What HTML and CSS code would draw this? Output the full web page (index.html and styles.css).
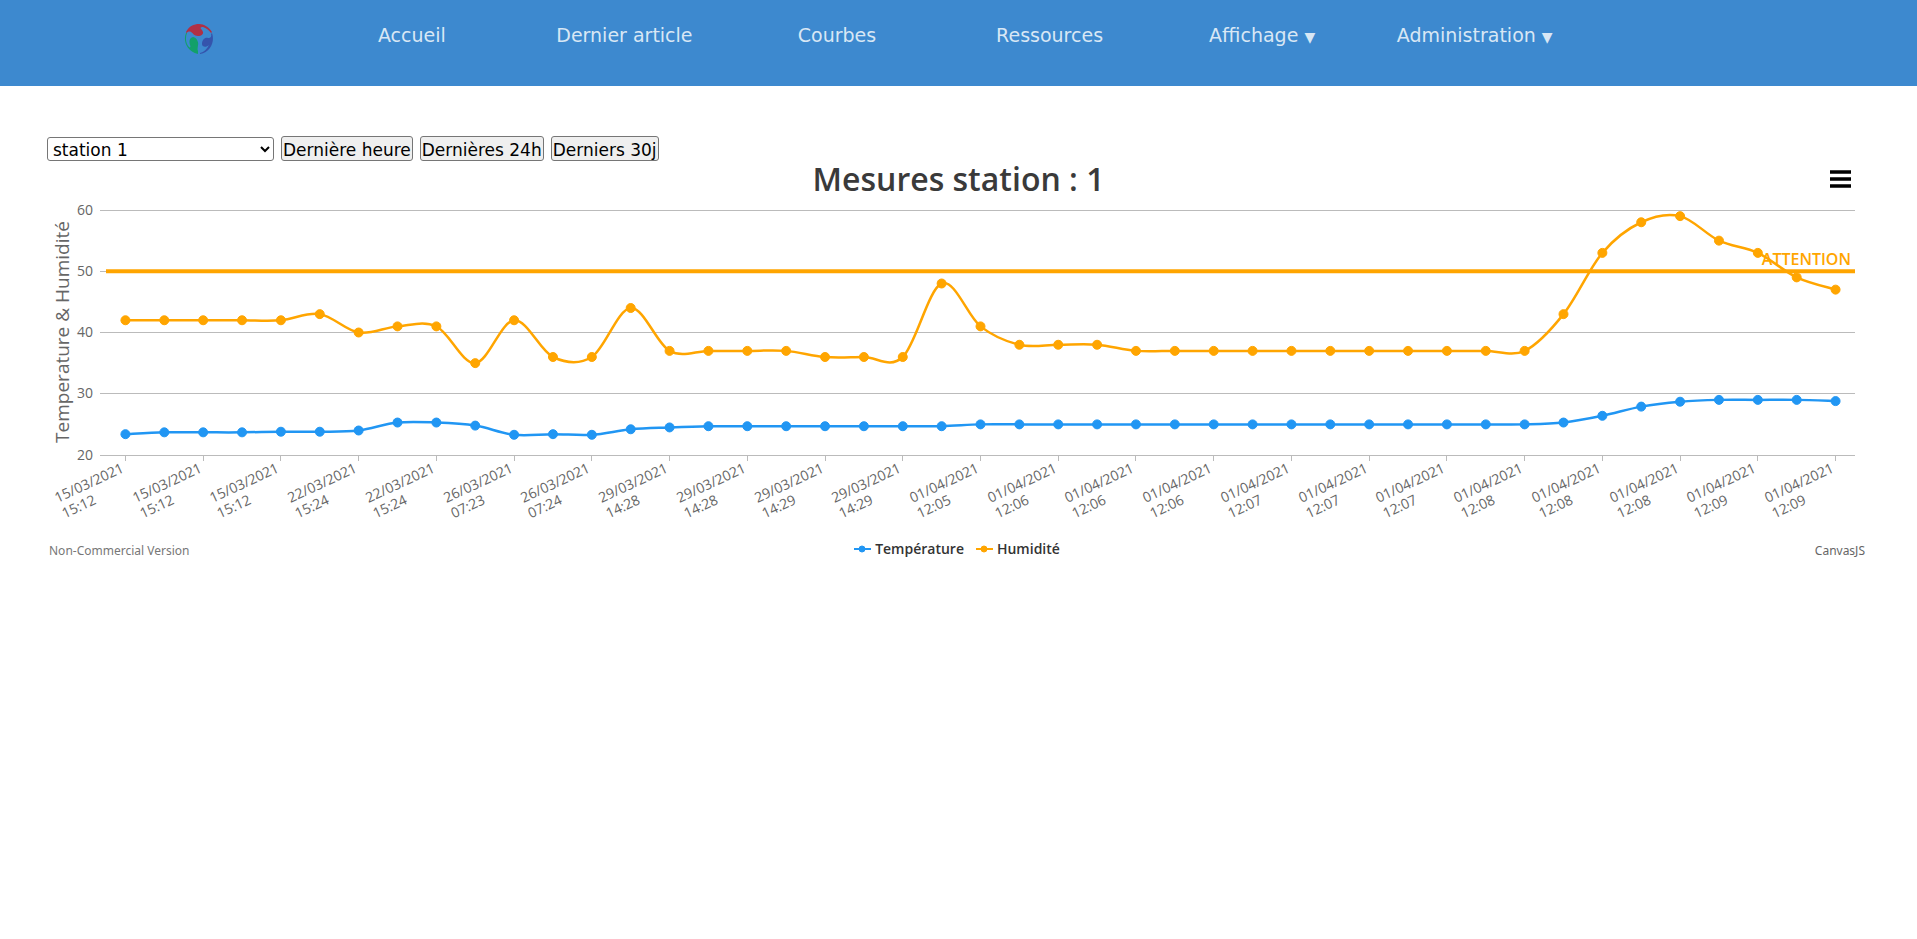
FILE: index.html
```html
<!DOCTYPE html>
<html lang="fr">
<head>
    <meta charset="utf-8">
    <title>Courbes</title>
    <link rel="stylesheet" href="styles.css">
</head>
<body>
    <nav class="navbar">
        <ul class="menu">
            <li>
                <a href="#" class="logo" aria-label="Accueil">
                    <svg width="30" height="32" viewBox="0 0 30 32">
                        <path fill="#b03045" d="M2 9C5 3 10 1 15 1s10 3 13 8l-1 1c-2-3-5-5-8-6-3 0-3 1-1 3 3 4-1 6-4 6-4 0-5-3-7-4-2-1-3 0-5 1z"/>
                        <path fill="#12a06a" d="M2 10C-1 17 2 28 14 31v-3c-1-2 0-4 0-6 1-3-2-8-5-8-4 1-4 5-3 8 1 2 0 3-1 2-3-3-4-9-2-14z"/>
                        <path fill="#3554ac" d="M28 10c3 8-1 19-12 21v-1c4-1 7-4 9-8-3 3-7 2-7-1 0-4 3-7 6-6 2 0 4-1 3-4z"/>
                    </svg>
                </a>
            </li>
            <li><a href="#">Accueil</a></li>
            <li><a href="#">Dernier article</a></li>
            <li><a href="#">Courbes</a></li>
            <li><a href="#">Ressources</a></li>
            <li><a href="#">Affichage <span class="caret">▼</span></a></li>
            <li><a href="#">Administration <span class="caret">▼</span></a></li>
        </ul>
    </nav>

    <main class="content">
        <form class="filters">
            <select class="station" aria-label="Station">
                <option>station 1</option>
            </select>
            <button type="button">Dernière heure</button>
            <button type="button">Dernières 24h</button>
            <button type="button">Derniers 30j</button>
        </form>

        <section class="chart">
            <h1 class="chart-title">Mesures station : 1</h1>
            <button type="button" class="chart-menu" aria-label="Menu">
                <svg width="21" height="18" viewBox="0 0 21 18">
                    <path d="M0 2h21M0 9h21M0 16h21" stroke="#000" stroke-width="3.5"/>
                </svg>
            </button>
            <svg class="plot" id="plot"></svg>
            <div class="chart-footer">
                <span class="version">Non-Commercial Version</span>
                <div class="legend">
                    <span class="legend-item temperature">
                        <svg width="17" height="8" viewBox="0 0 17 8"><path d="M0 4h17"/><circle cx="8" cy="4" r="3"/></svg>
                        Température
                    </span>
                    <span class="legend-item humidite">
                        <svg width="17" height="8" viewBox="0 0 17 8"><path d="M0 4h17"/><circle cx="8" cy="4" r="3"/></svg>
                        Humidité
                    </span>
                </div>
                <a href="#" class="credit">CanvasJS</a>
            </div>
        </section>
    </main>

    <script src="chart.js"></script>
</body>
</html>
```
FILE: styles.css
```css
* {
    box-sizing: border-box;
}

body {
    margin: 0;
    background: white;
    font-family: Verdana, "DejaVu Sans", sans-serif;
    font-size: 16px;
}

/* Barre de navigation */
.navbar {
    height: 86px;
    background: #3d89cf;
}

.menu {
    display: grid;
    grid-template-columns: repeat(7, 1fr);
    margin: 0;
    padding: 23px 336px 0 93px;
    list-style: none;
    text-align: center;
}

.menu a {
    color: #d8e7f5;
    font-size: 19px;
    line-height: 24px;
    text-decoration: none;
    white-space: nowrap;
}

.menu .caret {
    font-size: 14px;
}

.logo svg {
    display: block;
    margin: 0 auto;
}

/* Filtres */
.content {
    padding: 50px 47px 0;
}

.filters {
    display: flex;
    align-items: flex-end;
    gap: 7px;
}

.filters select,
.filters button {
    border: 1px solid #767676;
    border-radius: 3px;
    color: black;
    font-family: inherit;
    font-size: 17px;
}

.filters button {
    height: 25px;
    padding: 2px 1px 0;
    background: #efefef;
}

.filters .station {
    width: 227px;
    height: 24px;
    padding: 1px 1px 0;
    background: white;
}

/* Graphique */
.chart {
    position: relative;
    font-family: "Trebuchet MS", "Open Sans", sans-serif;
}

.chart-title {
    margin: 0;
    color: #3a3a3a;
    font-size: 32px;
    font-weight: 600;
    line-height: 36px;
    text-align: center;
}

.chart-menu {
    position: absolute;
    top: 9px;
    right: 19px;
    padding: 0;
    border: none;
    background: none;
}

.chart-menu svg {
    display: block;
}

.plot {
    display: block;
    width: 100%;
    height: 338px;
    overflow: visible;
}

.plot text {
    fill: #666;
    font-size: 14px;
}

.plot .axis-title {
    font-size: 19px;
}

.plot .limit-label {
    fill: orange;
    font-size: 16px;
    font-weight: 600;
}

.grid {
    stroke: #bbb;
}

.limit {
    stroke: orange;
    stroke-width: 4;
}

.curve {
    fill: none;
    stroke-width: 2.5;
}

.temperature {
    stroke: #2196f3;
}

.humidite {
    stroke: orange;
}

circle.temperature,
.temperature circle {
    fill: #2196f3;
}

circle.humidite,
.humidite circle {
    fill: orange;
}

.chart-footer {
    display: grid;
    grid-template-columns: 1fr auto 1fr;
    align-items: center;
    padding: 0 5px 0 2px;
    line-height: 24px;
}

.legend {
    display: flex;
    gap: 12px;
}

.legend-item {
    display: flex;
    align-items: center;
    gap: 4px;
    color: #333;
    font-size: 14px;
    font-weight: 600;
}

.legend-item path {
    stroke-width: 2;
}

.version,
.credit {
    padding-top: 4px;
    color: #777;
    font-family: Tahoma, "Noto Sans", sans-serif;
    font-size: 12px;
}

.credit {
    justify-self: end;
    color: #666;
    text-decoration: none;
}
```
FILE: chart.js
```js
const temperature = [
    23.4, 23.7, 23.7, 23.7, 23.8, 23.8, 24, 25.3, 25.3, 24.8, 23.3, 23.4, 23.3, 24.2, 24.5,
    24.7, 24.7, 24.7, 24.7, 24.7, 24.7, 24.7, 25, 25, 25, 25, 25, 25, 25, 25,
    25, 25, 25, 25, 25, 25, 25, 25.3, 26.4, 27.9, 28.7, 29, 29, 29, 28.8
];
const humidite = [
    42, 42, 42, 42, 42, 43, 40, 41, 41, 35, 42, 36, 36, 44, 37,
    37, 37, 37, 36, 36, 36, 48, 41, 38, 38, 38, 37, 37, 37, 37,
    37, 37, 37, 37, 37, 37, 37, 43, 53, 58, 59, 55, 53, 49, 47
];
// Une étiquette toutes les deux mesures
const labels = [
    "15/03/2021 15:12", "15/03/2021 15:12", "15/03/2021 15:12", "22/03/2021 15:24",
    "22/03/2021 15:24", "26/03/2021 07:23", "26/03/2021 07:24", "29/03/2021 14:28",
    "29/03/2021 14:28", "29/03/2021 14:29", "29/03/2021 14:29", "01/04/2021 12:05",
    "01/04/2021 12:06", "01/04/2021 12:06", "01/04/2021 12:06", "01/04/2021 12:07",
    "01/04/2021 12:07", "01/04/2021 12:07", "01/04/2021 12:08", "01/04/2021 12:08",
    "01/04/2021 12:08", "01/04/2021 12:09", "01/04/2021 12:09"
];

const plot = document.getElementById("plot");
const left = 59;
const rightMargin = 15;
const bottom = 258;

function y(value) {
    return bottom - (value - 20) * 245 / 40;
}

// Courbe lissée passant par tous les points
function curve(points, name) {
    let d = "M" + points[0];
    for (let i = 1; i < points.length; i++) {
        const p0 = points[Math.max(i - 2, 0)];
        const p1 = points[i - 1];
        const p2 = points[i];
        const p3 = points[Math.min(i + 1, points.length - 1)];
        const c1 = [p1[0] + (p2[0] - p0[0]) / 6, p1[1] + (p2[1] - p0[1]) / 6];
        const c2 = [p2[0] - (p3[0] - p1[0]) / 6, p2[1] - (p3[1] - p1[1]) / 6];
        d += "C" + [c1, c2, p2];
    }
    let out = `<path class="curve ${name}" d="${d}"/>`;
    points.forEach(p => {
        out += `<circle class="${name}" cx="${p[0]}" cy="${p[1]}" r="4.5"/>`;
    });
    return out;
}

function draw() {
    const right = plot.clientWidth - rightMargin;
    const step = (right - left) / temperature.length;
    const x = i => left + step * (i + 0.5);
    let out = "";

    // Axe vertical et lignes horizontales
    for (let v = 20; v <= 60; v += 10) {
        const line = Math.floor(y(v)) + 0.5;
        out += `<path class="grid" d="M${left - 6} ${line}H${right}"/>`;
        out += `<text x="${left - 13}" y="${line + 4}" text-anchor="end">${v}</text>`;
    }
    out += `<text class="axis-title" transform="translate(22 135) rotate(-90)" text-anchor="middle">Temperature &amp; Humidité</text>`;

    // Dates sous l'axe
    labels.forEach((label, i) => {
        const [day, hour] = label.split(" ");
        const tick = Math.floor(x(i * 2)) + 0.5;
        out += `<path class="grid" d="M${tick} ${bottom}v6"/>`;
        out += `<g transform="translate(${tick - 68} 306) rotate(-25)"><text>${day}</text><text y="17">${hour}</text></g>`;
    });

    out += `<path class="limit" d="M${left} ${y(50)}H${right}"/>`;
    out += curve(temperature.map((v, i) => [x(i), y(v)]), "temperature");
    out += curve(humidite.map((v, i) => [x(i), y(v)]), "humidite");
    out += `<text class="limit-label" x="${right - 4}" y="${y(50) - 6}" text-anchor="end">ATTENTION</text>`;
    plot.innerHTML = out;
}

draw();
window.addEventListener("resize", draw);
```
